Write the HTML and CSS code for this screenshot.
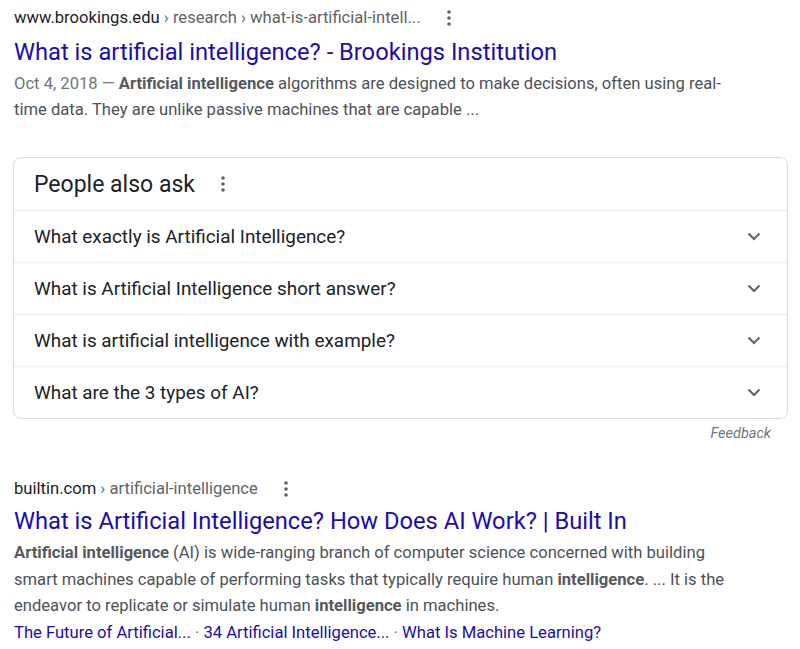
FILE: index.html
```html
<!DOCTYPE html>
<html>
<head>
<meta charset="utf-8">
<link rel="stylesheet" href="styles.css">
</head>
<body>
<div class="page">
  <div class="result">
    <div class="cite">
      <span class="host">www.brookings.edu</span><span class="path"> › research › what-is-artificial-intell...</span>
      <span class="more"><svg width="4" height="16" viewBox="0 0 4 16"><circle cx="2" cy="2" r="1.8"/><circle cx="2" cy="8" r="1.8"/><circle cx="2" cy="14" r="1.8"/></svg></span>
    </div>
    <a class="title">What is artificial intelligence? - Brookings Institution</a>
    <div class="snippet"><span class="date">Oct 4, 2018 — </span><b>Artificial intelligence</b> algorithms are designed to make decisions, often using real-time data. They are unlike passive machines that are capable ...</div>
  </div>

  <div class="paa">
    <div class="paa-head">
      <span class="paa-title">People also ask</span>
      <span class="more"><svg width="4" height="16" viewBox="0 0 4 16"><circle cx="2" cy="2" r="1.8"/><circle cx="2" cy="8" r="1.8"/><circle cx="2" cy="14" r="1.8"/></svg></span>
    </div>
    <div class="q"><span>What exactly is Artificial Intelligence?</span><svg class="chev" width="14" height="9" viewBox="0 0 14 9"><path d="M1.5 1.5 L7 7 L12.5 1.5" fill="none" stroke="#5f6368" stroke-width="2"/></svg></div>
    <div class="q"><span>What is Artificial Intelligence short answer?</span><svg class="chev" width="14" height="9" viewBox="0 0 14 9"><path d="M1.5 1.5 L7 7 L12.5 1.5" fill="none" stroke="#5f6368" stroke-width="2"/></svg></div>
    <div class="q"><span>What is artificial intelligence with example?</span><svg class="chev" width="14" height="9" viewBox="0 0 14 9"><path d="M1.5 1.5 L7 7 L12.5 1.5" fill="none" stroke="#5f6368" stroke-width="2"/></svg></div>
    <div class="q last"><span>What are the 3 types of AI?</span><svg class="chev" width="14" height="9" viewBox="0 0 14 9"><path d="M1.5 1.5 L7 7 L12.5 1.5" fill="none" stroke="#5f6368" stroke-width="2"/></svg></div>
  </div>
  <div class="feedback">Feedback</div>

  <div class="result second">
    <div class="cite">
      <span class="host">builtin.com</span><span class="path"> › artificial-intelligence</span>
      <span class="more"><svg width="4" height="16" viewBox="0 0 4 16"><circle cx="2" cy="2" r="1.8"/><circle cx="2" cy="8" r="1.8"/><circle cx="2" cy="14" r="1.8"/></svg></span>
    </div>
    <a class="title">What is Artificial Intelligence? How Does AI Work? | Built In</a>
    <div class="snippet"><b>Artificial intelligence</b> (AI) is wide-ranging branch of computer science concerned with building smart machines capable of performing tasks that typically require human <b>intelligence</b>. ... It is the endeavor to replicate or simulate human <b>intelligence</b> in machines.</div>
    <div class="links"><a>The Future of Artificial...</a><span class="sep"> · </span><a>34 Artificial Intelligence...</a><span class="sep"> · </span><a>What Is Machine Learning?</a></div>
  </div>
</div>
</body>
</html>
```
FILE: styles.css
```css
html, body {
  margin: 0;
  padding: 0;
  background: #fff;
}
body {
  font-family: Roboto, "Liberation Sans", Arial, sans-serif;
  color: #202124;
}
.page {
  padding: 7px 0 0 14px;
  width: 774px;
}
.result {
  width: 722px;
}
.cite {
  display: flex;
  align-items: center;
  font-size: 16.6px;
  line-height: 22px;
  height: 22px;
}
.host {
  color: #202124;
}
.path {
  color: #5f6368;
  white-space: pre;
}
.more {
  display: inline-flex;
  margin-left: 26px;
  fill: #5f6368;
}
.title {
  display: block;
  color: #1a0dab;
  font-size: 23.7px;
  line-height: 28px;
  margin-top: 9px;
}
.snippet {
  font-size: 16.6px;
  line-height: 26px;
  color: #4d5156;
  margin-top: 5px;
}
.snippet b {
  font-weight: 700;
  color: #55595e;
}
.date {
  color: #70757a;
}
.paa {
  margin-top: 34px;
  margin-left: -1px;
  border: 1px solid #dadce0;
  border-radius: 8px;
  overflow: hidden;
}
.paa-head {
  height: 52px;
  display: flex;
  align-items: center;
  padding-left: 20px;
  border-bottom: 1px solid #ebebeb;
}
.paa-title {
  font-size: 23px;
  color: #202124;
}
.paa-head .more {
  margin-left: 26px;
}
.q {
  height: 51px;
  display: flex;
  align-items: center;
  justify-content: space-between;
  padding: 0 26px 0 20px;
  font-size: 18.9px;
  color: #202124;
  border-bottom: 1px solid #ebebeb;
}
.q.last {
  border-bottom: none;
}
.feedback {
  text-align: right;
  font-style: italic;
  font-size: 14.5px;
  color: #70757a;
  line-height: 20px;
  margin-top: 5px;
  padding-right: 17px;
}
.second {
  margin-top: 34px;
}
.second .title {
  margin-top: 7px;
}
.second .snippet {
  margin-top: 5px;
  line-height: 26.5px;
}
.links {
  font-size: 16.6px;
  line-height: 26px;
}
.links a {
  color: #1a0dab;
}
.sep {
  color: #70757a;
  white-space: pre;
}
```
